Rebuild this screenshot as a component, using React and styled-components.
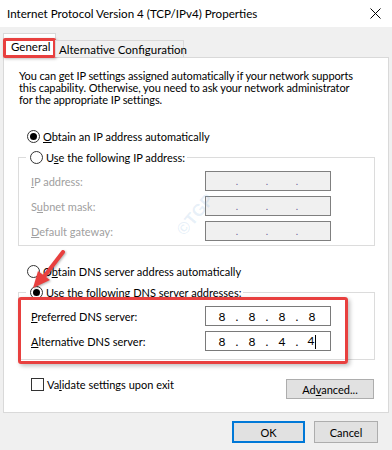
import React from 'react';
import styled, {createGlobalStyle} from "styled-components";

const Global=createGlobalStyle`
body{margin:0;background:#f0f0f0;}
*{box-sizing:border-box;}
`;

const Window=styled.div`
position:relative;
width:392px;
height:450px;
overflow:hidden;
background:#f0f0f0;
display:flex;
flex-direction:column;
font-family:Lato,"Noto Sans",sans-serif;
font-size:11px;
color:#000;
`;

const TitleBar=styled.div`
height:27px;
background:#fff;
display:flex;
align-items:center;
justify-content:space-between;
padding:0 11px 0 7px;
font-size:11.6px;
`;

const Body=styled.div`
padding:0 3px;
display:flex;
flex-direction:column;
`;

const TabRow=styled.div`
display:flex;
align-items:flex-end;
margin-top:6px;
height:25px;
margin-bottom:-1px;
position:relative;
z-index:1;
`;

const Tab=styled.div`
position:relative;
height:${p=>p.active?25:17}px;
background:${p=>p.active?'#fff':'#f0f0f0'};
border:1px solid #d9d9d9;
border-bottom:none;
padding:0 ${p=>p.active?7:3}px;
display:flex;
align-items:center;
width:${p=>p.w}px;
margin-left:${p=>p.active?0:-1}px;
margin-bottom:${p=>p.active?0:1}px;
white-space:nowrap;
font-size:11.5px;
`;

const TabMark=styled.div`
position:absolute;
left:-1px;
top:4px;
width:53px;
height:20px;
border:3px solid #e8403f;
border-radius:2px;
box-shadow:1px 1px 3px rgba(0,0,0,0.25);
`;

const Panel=styled.div`
height:356px;
background:#fff;
border:1px solid #d9d9d9;
padding:12px 15px 0 15px;
display:flex;
flex-direction:column;
`;

const Intro=styled.p`
margin:0;
line-height:12px;
white-space:nowrap;
letter-spacing:-0.1px;
`;

const RadioRow=styled.label`
display:flex;
align-items:center;
gap:3px;
height:16px;
padding-left:${p=>p.inset||8}px;
margin-top:${p=>p.top||0}px;
background:#fff;
`;

const Radio=styled.span`
width:13px;
height:13px;
border-radius:50%;
border:1px solid #333;
background:#fff;
display:flex;
align-items:center;
justify-content:center;
&::after{
content:"";
width:7px;
height:7px;
border-radius:50%;
background:${p=>p.on?'#000':'transparent'};
}
`;

const Group=styled.fieldset`
border:1px solid #dcdcdc;
margin:${p=>p.top}px -2px 0 -1px;
padding:6px 43px ${p=>p.bottom}px 12px;
min-width:0;
`;

const Legend=styled.legend`
padding:0 2px 0 0;
margin-left:-5px;
background:#fff;
`;

const Rows=styled.div`
position:relative;
display:flex;
flex-direction:column;
gap:5px;
`;

const Row=styled.div`
display:flex;
align-items:center;
justify-content:space-between;
height:20px;
color:${p=>p.disabled?'#a0a0a0':'#000'};
`;

const IpBox=styled.div`
width:126px;
height:20px;
border:1px solid ${p=>p.disabled?'#7f7f7f':'#7a7a7a'};
background:${p=>p.disabled?'#f0f0f0':'#fff'};
display:flex;
align-items:center;
padding-left:1px;
color:#000;
`;

const Octet=styled.span`
width:30px;
text-align:center;
font-size:12px;
`;

const Dot=styled.span`
width:0;
display:flex;
justify-content:center;
color:${p=>p.disabled?'#6a5f9a':'#000'};
font-size:${p=>p.disabled?10:12}px;
`;

const Caret=styled.span`
display:inline-block;
width:1px;
height:14px;
background:#000;
margin-left:1px;
vertical-align:middle;
`;

const DnsMark=styled.div`
position:absolute;
left:-13px;
top:-9px;
width:330px;
height:67px;
border:3px solid #e8403f;
border-radius:3px;
box-shadow:2px 2px 4px rgba(0,0,0,0.25);
pointer-events:none;
`;

const BottomRow=styled.div`
display:flex;
justify-content:space-between;
align-items:flex-start;
margin-top:17px;
padding-left:12px;
margin-right:-1px;
`;

const CheckRow=styled.label`
display:flex;
align-items:center;
gap:3px;
height:14px;
`;

const Box=styled.span`
width:13px;
height:13px;
border:1px solid #333;
background:#fff;
`;

const Button=styled.button`
font:inherit;
color:#000;
width:${p=>p.w}px;
height:${p=>p.h||20}px;
margin-top:${p=>p.top||0}px;
background:#e1e1e1;
border:${p=>p.primary?'2px solid #0078d7':'1px solid #adadad'};
padding:0;
`;

const Footer=styled.div`
display:flex;
justify-content:flex-end;
gap:9px;
margin-top:8px;
padding-right:11px;
`;

const U=styled.span`text-decoration:underline;`;

const Arrow=styled.svg`
position:absolute;
left:26px;
top:246px;
`;

const Watermark=styled.div`
position:absolute;
left:172px;
top:205px;
transform:rotate(-50deg);
color:rgba(110,160,215,0.16);
font-weight:bold;
font-size:17px;
font-family:"Liberation Sans",sans-serif;
`;

function Ip({values,disabled,caret}){
const v=values||['','','',''];
return(
<IpBox disabled={disabled}>
<Octet>{v[0]}</Octet><Dot disabled={disabled}>.</Dot>
<Octet>{v[1]}</Octet><Dot disabled={disabled}>.</Dot>
<Octet>{v[2]}</Octet><Dot disabled={disabled}>.</Dot>
<Octet>{v[3]}{caret&&<Caret/>}</Octet>
</IpBox>)
}

export default function App(){
return(
<Window>
<Global/>
<TitleBar>
<span>Internet Protocol Version 4 (TCP/IPv4) Properties</span>
<svg width="11" height="11" viewBox="0 0 11 11"><path d="M0.5 0.5L10.5 10.5M10.5 0.5L0.5 10.5" stroke="#000" strokeWidth="1"/></svg>
</TitleBar>
<Body>
<TabRow>
<Tab active w={53}>General<TabMark/></Tab>
<Tab w={129}>Alternative Configuration</Tab>
</TabRow>
<Panel>
<Intro>You can get IP settings assigned automatically if your network supports<br/>this capability. Otherwise, you need to ask your network administrator<br/>for the appropriate IP settings.</Intro>

<RadioRow top={22}><Radio on/><span><U>O</U>btain an IP address automatically</span></RadioRow>
<Group top={5} bottom={4}>
<Legend><RadioRow inset={4}><Radio/><span>U<U>s</U>e the following IP address:</span></RadioRow></Legend>
<Rows>
<Row disabled><span><U>I</U>P address:</span><Ip disabled/></Row>
<Row disabled><span>S<U>u</U>bnet mask:</span><Ip disabled/></Row>
<Row disabled><span><U>D</U>efault gateway:</span><Ip disabled/></Row>
</Rows>
</Group>

<RadioRow top={17}><Radio/><span>O<U>b</U>tain DNS server address automatically</span></RadioRow>
<Group top={5} bottom={8}>
<Legend><RadioRow inset={4}><Radio on/><span>Us<U>e</U> the following DNS server addresses:</span></RadioRow></Legend>
<Rows>
<Row><span><U>P</U>referred DNS server:</span><Ip values={['8','8','8','8']}/></Row>
<Row><span><U>A</U>lternative DNS server:</span><Ip values={['8','8','4','4']} caret/></Row>
<DnsMark/>
</Rows>
</Group>

<BottomRow>
<CheckRow><Box/><span>Va<U>l</U>idate settings upon exit</span></CheckRow>
<Button w={88} top={2}>Ad<U>v</U>anced...</Button>
</BottomRow>
</Panel>
<Footer>
<Button primary w={73} h={22}>OK</Button>
<Button w={64} h={22}>Cancel</Button>
</Footer>
</Body>
<Watermark>©TGP</Watermark>
<Arrow width="44" height="46" viewBox="0 0 44 46">
<g filter="drop-shadow(1px 1px 1px rgba(0,0,0,0.3))">
<path d="M37 6L17 32" stroke="#e8403f" strokeWidth="4" strokeLinecap="round"/>
<path d="M7 42L12 25L24 34Z" fill="#e8403f"/>
</g>
</Arrow>
</Window>)
}
